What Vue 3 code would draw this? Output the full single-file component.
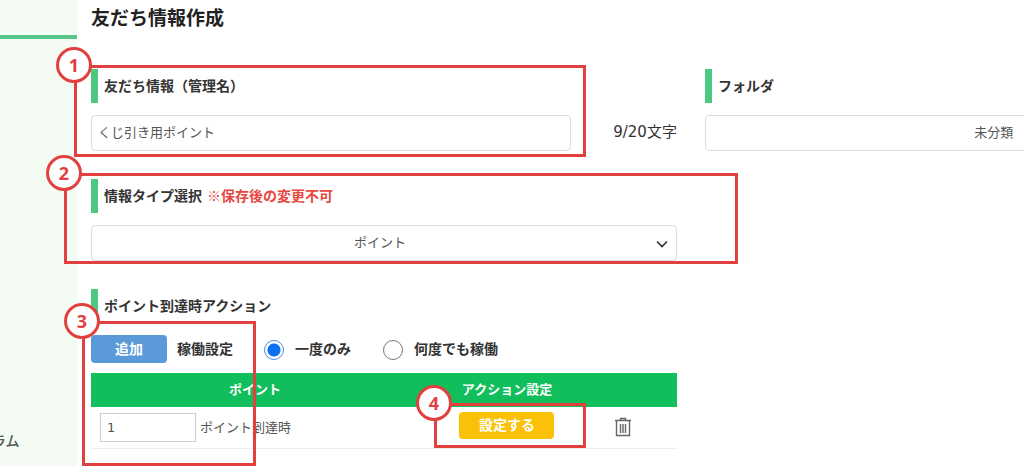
<template>
  <div class="page">
    <aside class="sidebar">
      <div class="sidebar-line"></div>
      <a href="#" class="sidebar-link">ラム</a>
    </aside>

    <main class="main">
      <h1 class="title">友だち情報作成</h1>

      <div class="form">
        <div class="column">
          <section class="field">
            <label class="heading" for="name">友だち情報（管理名）</label>
            <div class="name-row">
              <input id="name" v-model="name" class="control name-input" type="text" maxlength="20" />
              <span class="counter">{{ name.length }}/20文字</span>
            </div>
          </section>

          <section class="field">
            <label class="heading" for="type">
              情報タイプ選択<span class="warning">※保存後の変更不可</span>
            </label>
            <div class="select-wrap">
              <select id="type" v-model="type" class="control">
                <option value="point">ポイント</option>
              </select>
              <svg class="chevron" viewBox="0 0 12 8" aria-hidden="true">
                <path d="M1 1.5 6 6.5 11 1.5" />
              </svg>
            </div>
          </section>

          <section class="field">
            <h2 class="heading">ポイント到達時アクション</h2>
            <div class="action-row">
              <button type="button" class="btn btn-add">追加</button>
              <span id="repeat-label" class="repeat-label">稼働設定</span>
              <div class="radios" role="radiogroup" aria-labelledby="repeat-label">
                <label v-for="r in repeats" :key="r.value" class="radio">
                  <input v-model="repeat" type="radio" name="repeat" :value="r.value" />
                  <span>{{ r.label }}</span>
                </label>
              </div>
            </div>

            <table class="table">
              <thead>
                <tr>
                  <th class="col-point">ポイント</th>
                  <th class="col-action">アクション設定</th>
                  <th></th>
                </tr>
              </thead>
              <tbody>
                <tr>
                  <td>
                    <div class="point-cell">
                      <input id="point" v-model="point" class="point-input" type="text" />
                      <label for="point">ポイント到達時</label>
                    </div>
                  </td>
                  <td class="center">
                    <button type="button" class="btn btn-set">設定する</button>
                  </td>
                  <td class="delete-cell">
                    <button type="button" class="btn-delete" aria-label="削除">
                      <svg viewBox="0 0 18 20" aria-hidden="true">
                        <path d="M1 3.5h16M6.5 3V1.500h5V3M2.500 3.500v15h13v-15M6.500 7v9M9 7v9M11.500 7v9" />
                      </svg>
                    </button>
                  </td>
                </tr>
              </tbody>
            </table>
          </section>
        </div>

        <div class="column">
          <section class="field">
            <label class="heading" for="folder">フォルダ</label>
            <select id="folder" v-model="folder" class="control folder">
              <option value="none">未分類</option>
            </select>
          </section>
        </div>
      </div>
    </main>

    <!-- numbered guide frames -->
    <div v-for="g in guides" :key="g.no" class="guide" :style="guideStyle(g)">
      <span class="guide-no">{{ g.no }}</span>
    </div>
  </div>
</template>

<script setup>
import { ref } from 'vue'

const name = ref('くじ引き用ポイント')
const type = ref('point')
const folder = ref('none')
const repeat = ref('once')
const point = ref('1')

const repeats = [
  { value: 'once', label: '一度のみ' },
  { value: 'always', label: '何度でも稼働' },
]

const guides = [
  { no: 1, x: 74, y: 65, w: 512, h: 92 },
  { no: 2, x: 64, y: 173, w: 674, h: 91 },
  { no: 3, x: 82, y: 321, w: 174, h: 145 },
  { no: 4, x: 434, y: 403, w: 152, h: 45 },
]

function guideStyle(g) {
  return { left: g.x + 'px', top: g.y + 'px', width: g.w + 'px', height: g.h + 'px' }
}
</script>

<style>
body {
  margin: 0;
  background: #fff;
}
</style>

<style scoped>
* { box-sizing: border-box; }

.page {
  position: relative;
  display: flex;
  min-height: calc(100vh - 6px);
  overflow: hidden;
  font-family: "Noto Sans CJK JP", sans-serif;
  font-size: 14px;
  line-height: 20px;
  color: #333;
}
input, select, button { font-family: inherit; }

.sidebar {
  flex: none;
  width: 77px;
  padding: 35px 0 16px;
  display: flex;
  flex-direction: column;
  justify-content: space-between;
  overflow: hidden;
  background: #f3fbf3;
}
.sidebar-line { height: 4px; background: #58c78c; }
.sidebar-link {
  margin-left: -8px;
  color: #555;
  font-weight: 500;
  text-decoration: none;
}

.main {
  flex: 1;
  min-width: 0;
  padding: 3px 0 0 14px;
}
.title {
  margin: 0 0 38px;
  font-size: 19px;
  line-height: 28px;
  font-weight: 700;
  color: #222;
}

/* the second column runs past the right edge of the window */
.form {
  display: grid;
  grid-template-columns: 1fr 1fr;
  gap: 28px;
  width: 128.6%;
}
.column {
  display: flex;
  flex-direction: column;
  gap: 28px;
  min-width: 0;
}
.heading {
  display: flex;
  align-items: center;
  gap: 5px;
  height: 34px;
  margin: 0 0 12px;
  padding: 0 0 3px 6px;
  border-left: 7px solid #4bc981;
  font-size: 14px;
  font-weight: 700;
}
.warning { color: #e8473f; }

.control {
  display: block;
  width: 100%;
  height: 36px;
  padding: 0 6px 3px;
  border: 1px solid #ddd;
  border-radius: 4px;
  background: #fff;
  font-size: 13px;
  color: #555;
  outline: none;
}
select.control {
  appearance: none;
  padding-right: 14px;
  text-align: center;
  text-align-last: center;
}

.name-row {
  display: flex;
  align-items: center;
  justify-content: space-between;
}
.name-input { width: 82%; }
.counter {
  padding-bottom: 3px;
  font-family: "DejaVu Sans", "Noto Sans CJK JP", sans-serif;
  font-size: 15px;
}

.select-wrap { position: relative; }
.chevron {
  position: absolute;
  right: 9px;
  top: 15px;
  width: 12px;
  height: 8px;
  fill: none;
  stroke: #333;
  stroke-width: 1.6;
  pointer-events: none;
}

.action-row {
  display: flex;
  align-items: center;
  height: 28px;
  margin-bottom: 10px;
  font-weight: 700;
}
.btn {
  padding: 0 0 2px;
  border: none;
  border-radius: 4px;
  font-size: 14px;
  font-weight: 700;
  line-height: 20px;
  color: #fff;
}
.btn-add { width: 76px; height: 28px; background: #5b9ad9; }
.repeat-label {
  margin: 0 31px 0 10px;
  padding-bottom: 2px;
}
.radios { display: flex; gap: 32px; }
.radio {
  display: flex;
  align-items: center;
  gap: 11px;
}
.radio span { padding-bottom: 2px; }
.radio input {
  appearance: none;
  width: 20px;
  height: 20px;
  margin: 2px 0 0;
  border: 1px solid #777;
  border-radius: 50%;
}
.radio input:checked {
  border-color: #4c8ddb;
  background: radial-gradient(circle, #0b6ff5 6px, #fff 7px);
}

.table {
  width: 100%;
  border-collapse: collapse;
  table-layout: fixed;
  font-size: 13px;
}
.table th {
  height: 34px;
  padding: 0 0 2px;
  background: #10bf5b;
  color: #fff;
  font-weight: 700;
}
.col-point { width: 56%; }
.col-action { width: 30%; }
.table td {
  height: 41px;
  padding: 0;
  border-bottom: 1px solid #eee;
  color: #555;
}
.point-cell {
  display: flex;
  align-items: center;
  gap: 4px;
  padding-left: 9px;
}
.point-input {
  width: 96px;
  height: 29px;
  padding: 0 6px;
  border: 1px solid #ccc;
  background: #fff;
  font-family: "DejaVu Sans", sans-serif;
  font-size: 13px;
  color: #555;
}
.center { text-align: center; }
.btn-set {
  display: block;
  width: 95px;
  height: 27px;
  margin: 0 auto 4px;
  background: #fbc108;
}
.table .delete-cell { padding-left: 19px; }
.btn-delete {
  display: block;
  padding: 0;
  border: none;
  background: none;
}
.btn-delete svg {
  display: block;
  width: 18px;
  height: 20px;
  fill: none;
  stroke: #666;
  stroke-width: 1.4;
}

.guide {
  position: absolute;
  border: 3px solid #e23f3f;
  pointer-events: none;
}
.guide-no {
  position: absolute;
  left: -21px;
  top: -21px;
  display: flex;
  align-items: center;
  justify-content: center;
  width: 36px;
  height: 36px;
  border: 3px solid #e23f3f;
  border-radius: 50%;
  background: #fff;
  font-family: "Open Sans", sans-serif;
  font-size: 18px;
  font-weight: 700;
  color: #e23f3f;
}
</style>
